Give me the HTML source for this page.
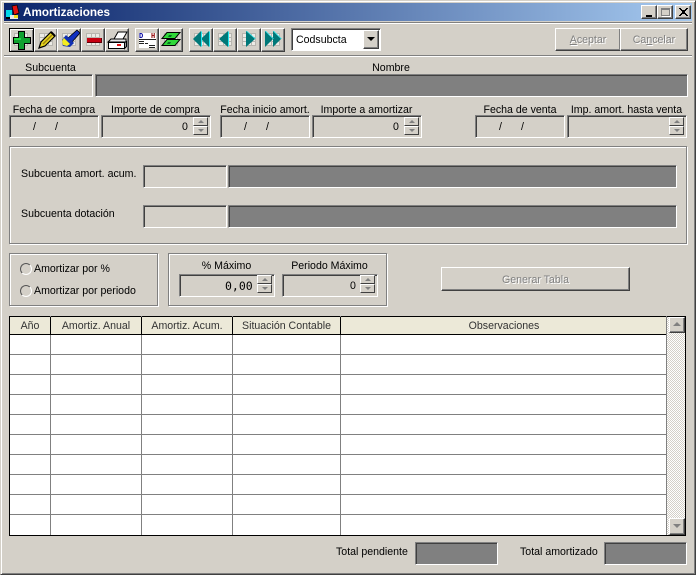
<!DOCTYPE html>
<html><head><meta charset="utf-8"><style>
html,body{margin:0;padding:0;background:#d4d0c8;}
#w{position:relative;width:696px;height:575px;overflow:hidden;background:#d4d0c8;font-family:"Liberation Sans",sans-serif;font-size:10.6px;color:#000;}
#w div,#w svg{position:absolute;box-sizing:border-box;}
.l{white-space:nowrap;height:16px;line-height:16px;text-align:center;}
.f{border:1px solid;border-color:#808080 #fff #fff #808080;box-shadow:inset 1px 1px #404040;background:#d4d0c8;}
.g{background:#808080;}
.t{font-size:10.6px;line-height:16px;white-space:nowrap;}
.b{border:1px solid;border-color:#fff #404040 #404040 #fff;box-shadow:inset -1px -1px #808080;background:#d4d0c8;}
.d{color:#808080;text-shadow:1px 1px 0 #fff;text-align:center;}
.gb{border:1px solid #808080;box-shadow:1px 1px 0 #fff,inset 1px 1px 0 #fff;}
.s{width:15px;height:9px;border:1px solid;border-color:#fff #404040 #404040 #fff;background:#d4d0c8;}
.s:after{content:"";position:absolute;left:4px;top:2px;border-left:3px solid transparent;border-right:3px solid transparent;border-bottom:3px solid #808080;}
.s.dn:after{border-bottom:0;border-top:3px solid #808080;}
.col{top:316px;width:1px;height:219px;background:#808080;}
.hc{top:317px;height:17px;line-height:19px;text-align:center;color:#333;white-space:nowrap;}
.row{left:10px;width:657px;height:1px;background:#808080;}
svg{shape-rendering:crispEdges;}
</style></head><body><div id="w">

<!-- window frame -->
<div style="left:0;top:0;width:696px;height:575px;border:1px solid;border-color:#d4d0c8 #404040 #404040 #d4d0c8;box-shadow:inset 1px 1px #fff,inset -1px -1px #808080;"></div>
<!-- title bar -->
<div style="left:4px;top:3px;width:688px;height:18px;background:linear-gradient(90deg,#0a246a,#a6caf0);"></div>
<svg style="left:5px;top:3px;shape-rendering:auto" width="17" height="18" viewBox="0 0 17 18">
<path d="M1 7h6v7H1z" fill="#00d8e8"/><path d="M7 3l5-1 2 8-5 2z" fill="#e01010" stroke="#000" stroke-width=".7"/><path d="M5 12h8v4H5z" fill="#e8e8e8"/><path d="M9 12h4v3H9z" fill="#f0e020"/><path d="M1 14h4v2H1z" fill="#000"/>
</svg>
<div class="t" style="left:23px;top:5px;color:#fff;font-weight:bold;font-size:11.7px;">Amortizaciones</div>
<div class="b" style="left:641px;top:5px;width:16px;height:14px;"><div style="left:4px;top:9px;width:6px;height:2px;background:#000"></div></div>
<div class="b" style="left:657px;top:5px;width:16px;height:14px;"><div style="left:3px;top:2px;width:9px;height:8px;border:1px solid #808080;border-top-width:2px;box-shadow:1px 1px #fff"></div></div>
<div class="b" style="left:675px;top:5px;width:16px;height:14px;"><svg style="left:3px;top:2px" width="9" height="8" viewBox="0 0 9 8" ><path d="M0 0h2v1h1v1h3V1h1V0h2v1H8v1H7v1H6v2h1v1h1v1h1v1H7V7H6V6H3v1H2v1H0V7h1V6h1V5h1V3H2V2H1V1H0z" fill="#000"/></svg></div>
<!-- separators -->
<div style="left:4px;top:22px;width:688px;height:1px;background:#808080"></div>
<div style="left:4px;top:23px;width:688px;height:1px;background:#fff"></div>
<div style="left:4px;top:55px;width:688px;height:1px;background:#808080"></div>
<div style="left:4px;top:56px;width:688px;height:1px;background:#fff"></div>

<svg width="0" height="0" style="left:0;top:0"><defs>
<g id="gr"><path d="M5 5h14v13H5z" fill="#d8d6d0"/><path d="M6 6h4v3H6zM11 6h3v3h-3zM15 6h3v3h-3zM6 10h4v3H6zM11 10h3v3h-3zM15 10h3v3h-3zM6 14h4v3H6zM11 14h3v3h-3zM15 14h3v3h-3z" fill="#ecebe6"/><path d="M5 5h14v1H5zM5 9h14v1H5zM5 13h14v1H5zM5 17h14v1H5zM5 5h1v13H5zM10 5h1v13h-1zM14 5h1v13h-1zM18 5h1v13h-1z" fill="#b8b6b0"/></g>
</defs></svg>

<!-- toolbar -->
<div class="b" style="left:9px;top:28px;width:25px;height:24px;border-color:#000;box-shadow:inset 1px 1px #fff,inset -1px -1px #808080;"><svg width="23" height="22" viewBox="0 0 23 22" style="left:0;top:0"><use href="#gr" x="-1" y="-1"/><path d="M8 2h7v6h6v7h-6v6H8v-6H3V8h5z" fill="#000"/><path d="M9 3h5v6h6v5h-6v6H9v-6H4V9h5z" fill="#10a030"/><path d="M9 3h2v6H4v2h7V3z" fill="#20d840" /></svg></div>
<div class="b" style="left:34px;top:28px;width:24px;height:24px;"><svg width="22" height="22" viewBox="0 0 22 22" style="left:0;top:0;shape-rendering:auto"><use href="#gr" x="-1" y="-1" style="shape-rendering:crispEdges"/><path d="M4 19l2-6L16 3l4 4L10 17z" fill="#e8d820" stroke="#000" stroke-width="1.2"/><path d="M8 15L17 6" stroke="#a08010" stroke-width="1.500" fill="none"/><path d="M16 3l4 4" stroke="#000" stroke-width="2"/></svg></div>
<div class="b" style="left:57px;top:28px;width:24px;height:24px;"><svg width="22" height="22" viewBox="0 0 22 22" style="left:0;top:0;shape-rendering:auto"><use href="#gr" x="-1" y="-1" style="shape-rendering:crispEdges"/><path d="M10 9l9-8 3 3-8 9z" fill="#1030c0" stroke="#000" stroke-width=".8"/><path d="M8 6l8 8-3 3-1 1-7-1-1-6z" fill="#1030b0"/><path d="M6 9l6 6-3 2-4-1-1-4z" fill="#f4ec20"/></svg></div>
<div class="b" style="left:81px;top:28px;width:24px;height:24px;"><svg width="22" height="22" viewBox="0 0 22 22" style="left:0;top:0"><use href="#gr" x="-1" y="-1"/><path d="M5 9h15v5H5z" fill="#600008"/><path d="M5 9h14v4H5z" fill="#c80010"/></svg></div>
<div class="b" style="left:105px;top:28px;width:24px;height:24px;"><svg width="22" height="22" viewBox="0 0 22 22" style="left:0;top:0;shape-rendering:auto"><path d="M8 10l4-7h9l-4 7z" fill="#fff" stroke="#000"/><path d="M2 13l3-3h15v3z" fill="#e8e8e8" stroke="#000"/><path d="M2.500 13.500h16v6h-16z" fill="#fff" stroke="#000"/><path d="M18.500 13.500l2-1v5l-2 2z" fill="#999" stroke="#000"/><path d="M11 15h4v2h-4z" fill="#e01010"/></svg></div>

<div class="b" style="left:135px;top:28px;width:24px;height:24px;"><div style="left:3px;top:4px;width:17px;height:15px;background:#fff;"></div><svg width="22" height="22" viewBox="0 0 22 22" style="left:0;top:0"><text x="3" y="9" font-family="Liberation Mono" font-size="7" font-weight="bold" fill="#0000a0">D</text><text x="15" y="9" font-family="Liberation Mono" font-size="7" font-weight="bold" fill="#900000">H</text><path d="M3 10h17v1H3zM3 12h5v1H3zM3 14h5v1H3zM9 14h3v1H9zM13 16h6v1h-6zM13 18h6v1h-6z" fill="#222"/></svg></div>
<div class="b" style="left:159px;top:28px;width:24px;height:24px;"><svg width="22" height="22" viewBox="0 0 22 22" style="left:0;top:0;shape-rendering:auto"><use href="#gr" x="-1" y="-1" style="shape-rendering:crispEdges"/><path d="M7 3.500h13l-5 6H2z" fill="#30d838" stroke="#000"/><path d="M7 10.500h13l-5 6H2z" fill="#30d838" stroke="#000"/><path d="M9 6h3l-1 2H8zM8 13h3l-1 2H7z" fill="#087020"/></svg></div>

<div class="b" style="left:189px;top:28px;width:24px;height:24px;"><svg width="22" height="22" viewBox="0 0 22 22" style="left:0;top:0;shape-rendering:auto"><use href="#gr" x="-1" y="-1" style="shape-rendering:crispEdges"/><path d="M11 2v16L3 10zM19 2v16l-8-8z" fill="#007878"/><path d="M11 2v16l1-1V3zM19 2v16l1-1V3z" fill="#20e8f0"/></svg></div>
<div class="b" style="left:213px;top:28px;width:24px;height:24px;"><svg width="22" height="22" viewBox="0 0 22 22" style="left:0;top:0;shape-rendering:auto"><use href="#gr" x="-1" y="-1" style="shape-rendering:crispEdges"/><path d="M14 2v16L5 10z" fill="#007878"/><path d="M14 2v16l1-1V3z" fill="#20e8f0"/></svg></div>
<div class="b" style="left:237px;top:28px;width:24px;height:24px;"><svg width="22" height="22" viewBox="0 0 22 22" style="left:0;top:0;shape-rendering:auto"><use href="#gr" x="-1" y="-1" style="shape-rendering:crispEdges"/><path d="M8 2v16l9-8z" fill="#007878"/><path d="M8 2l9 8h1L9 2z" fill="#20e8f0"/></svg></div>
<div class="b" style="left:261px;top:28px;width:24px;height:24px;"><svg width="22" height="22" viewBox="0 0 22 22" style="left:0;top:0;shape-rendering:auto"><use href="#gr" x="-1" y="-1" style="shape-rendering:crispEdges"/><path d="M3 2v16l8-8zM11 2v16l8-8z" fill="#007878"/><path d="M3 2l8 8h1L4 2zM11 2l8 8h1L12 2z" fill="#20e8f0"/></svg></div>

<!-- combo -->
<div class="f" style="left:291px;top:28px;width:90px;height:23px;background:#fff;"></div>
<div class="t" style="left:296px;top:32px;">Codsubcta</div>
<div class="b" style="left:363px;top:30px;width:16px;height:19px;"><div style="left:3px;top:6px;border-left:4px solid transparent;border-right:4px solid transparent;border-top:4px solid #000;"></div></div>
<!-- Aceptar/Cancelar -->
<div class="b d" style="left:555px;top:28px;width:66px;height:23px;line-height:23px;"><u>A</u>ceptar</div>
<div class="b d" style="left:620px;top:28px;width:68px;height:23px;line-height:23px;">Ca<u>n</u>celar</div>

<!-- row 1 -->
<div class="l" style="left:9px;top:60px;width:83px;">Subcuenta</div>
<div class="l" style="left:95px;top:60px;width:592px;">Nombre</div>
<div class="f" style="left:9px;top:74px;width:84px;height:23px;"></div>
<div class="f g" style="left:95px;top:74px;width:593px;height:23px;"></div>

<!-- row 2 -->
<div class="l" style="left:9px;top:102px;width:90px;">Fecha de compra</div>
<div class="l" style="left:101px;top:102px;width:109px;">Importe de compra</div>
<div class="l" style="left:220px;top:102px;width:90px;">Fecha inicio amort.</div>
<div class="l" style="left:312px;top:102px;width:109px;">Importe a amortizar</div>
<div class="l" style="left:475px;top:102px;width:90px;">Fecha de venta</div>
<div class="l" style="left:567px;top:102px;width:119px;">Imp. amort. hasta venta</div>

<div class="f" style="left:9px;top:115px;width:90px;height:23px;"></div>
<div class="t" style="left:33px;top:119px;">/</div><div class="t" style="left:55px;top:119px;">/</div>
<div class="f" style="left:101px;top:115px;width:110px;height:23px;"></div>
<div class="t" style="left:182px;top:119px;">0</div>
<div class="s" style="left:193px;top:117px;"></div><div class="s dn" style="left:193px;top:126px;"></div>

<div class="f" style="left:220px;top:115px;width:90px;height:23px;"></div>
<div class="t" style="left:244px;top:119px;">/</div><div class="t" style="left:266px;top:119px;">/</div>
<div class="f" style="left:312px;top:115px;width:110px;height:23px;"></div>
<div class="t" style="left:393px;top:119px;">0</div>
<div class="s" style="left:404px;top:117px;"></div><div class="s dn" style="left:404px;top:126px;"></div>

<div class="f" style="left:475px;top:115px;width:90px;height:23px;"></div>
<div class="t" style="left:499px;top:119px;">/</div><div class="t" style="left:521px;top:119px;">/</div>
<div class="f" style="left:567px;top:115px;width:120px;height:23px;"></div>
<div class="s" style="left:669px;top:117px;"></div><div class="s dn" style="left:669px;top:126px;"></div>

<!-- group -->
<div class="gb" style="left:9px;top:146px;width:678px;height:98px;"></div>
<div class="t" style="left:21px;top:166px;">Subcuenta amort. acum.</div>
<div class="f" style="left:143px;top:165px;width:84px;height:23px;"></div>
<div class="f g" style="left:228px;top:165px;width:449px;height:23px;"></div>
<div class="t" style="left:21px;top:206px;">Subcuenta dotación</div>
<div class="f" style="left:143px;top:205px;width:84px;height:23px;"></div>
<div class="f g" style="left:228px;top:205px;width:449px;height:23px;"></div>

<!-- radios -->
<div class="gb" style="left:9px;top:253px;width:149px;height:53px;"></div>
<div style="left:20px;top:263px;width:12px;height:12px;border-radius:50%;border:1px solid;border-color:#555 #fff #fff #555;"></div>
<div class="t" style="left:34px;top:261px;">Amortizar por %</div>
<div style="left:20px;top:285px;width:12px;height:12px;border-radius:50%;border:1px solid;border-color:#555 #fff #fff #555;"></div>
<div class="t" style="left:34px;top:283px;">Amortizar por periodo</div>

<div class="gb" style="left:168px;top:253px;width:219px;height:53px;"></div>
<div class="l" style="left:179px;top:258px;width:95px;">% Máximo</div>
<div class="l" style="left:282px;top:258px;width:95px;">Periodo Máximo</div>
<div class="f" style="left:179px;top:274px;width:96px;height:23px;"></div>
<div class="t" style="left:225px;top:278px;font-family:'DejaVu Sans Mono','Liberation Mono',monospace;font-size:11.500px;">0,00</div>
<div class="s" style="left:257px;top:275px;"></div><div class="s dn" style="left:257px;top:284px;"></div>
<div class="f" style="left:282px;top:274px;width:96px;height:23px;"></div>
<div class="t" style="left:350px;top:278px;">0</div>
<div class="s" style="left:360px;top:275px;"></div><div class="s dn" style="left:360px;top:284px;"></div>

<div class="b d" style="left:441px;top:267px;width:189px;height:24px;line-height:24px;">Generar Tabla</div>

<!-- grid -->
<div style="left:9px;top:316px;width:677px;height:220px;background:#fff;border:1px solid #000;"></div>
<div style="left:10px;top:317px;width:657px;height:17px;background:#ece9d8;"></div>
<div style="left:10px;top:334px;width:657px;height:1px;background:#000;"></div>
<div class="col" style="left:50px;"></div><div class="col" style="left:141px;"></div><div class="col" style="left:232px;"></div><div class="col" style="left:340px;"></div><div class="col" style="left:666px;"></div>
<div style="left:50px;top:317px;width:1px;height:18px;background:#000"></div><div style="left:141px;top:317px;width:1px;height:18px;background:#000"></div><div style="left:232px;top:317px;width:1px;height:18px;background:#000"></div><div style="left:340px;top:317px;width:1px;height:18px;background:#000"></div>
<div class="hc" style="left:10px;width:40px;">Año</div>
<div class="hc" style="left:51px;width:90px;">Amortiz. Anual</div>
<div class="hc" style="left:142px;width:90px;">Amortiz. Acum.</div>
<div class="hc" style="left:233px;width:107px;">Situación Contable</div>
<div class="hc" style="left:341px;width:326px;">Observaciones</div>
<div class="row" style="top:354px"></div><div class="row" style="top:374px"></div><div class="row" style="top:394px"></div><div class="row" style="top:414px"></div><div class="row" style="top:434px"></div><div class="row" style="top:454px"></div><div class="row" style="top:474px"></div><div class="row" style="top:494px"></div><div class="row" style="top:514px"></div>
<!-- scrollbar -->
<div style="left:667px;top:317px;width:18px;height:218px;background:repeating-conic-gradient(#fff 0 25%,#d4d0c8 0 50%) 0 0/2px 2px;"></div>
<div class="b" style="left:669px;top:317px;width:16px;height:16px;"><div style="left:3px;top:4px;border-left:4px solid transparent;border-right:4px solid transparent;border-bottom:4px solid #808080;"></div></div>
<div class="b" style="left:669px;top:518px;width:16px;height:17px;"><div style="left:3px;top:5px;border-left:4px solid transparent;border-right:4px solid transparent;border-top:4px solid #808080;"></div></div>

<!-- totals -->
<div class="t" style="left:336px;top:544px;">Total pendiente</div>
<div class="f g" style="left:415px;top:542px;width:83px;height:23px;"></div>
<div class="t" style="left:520px;top:544px;">Total amortizado</div>
<div class="f g" style="left:604px;top:542px;width:83px;height:23px;"></div>

</div></body></html>
